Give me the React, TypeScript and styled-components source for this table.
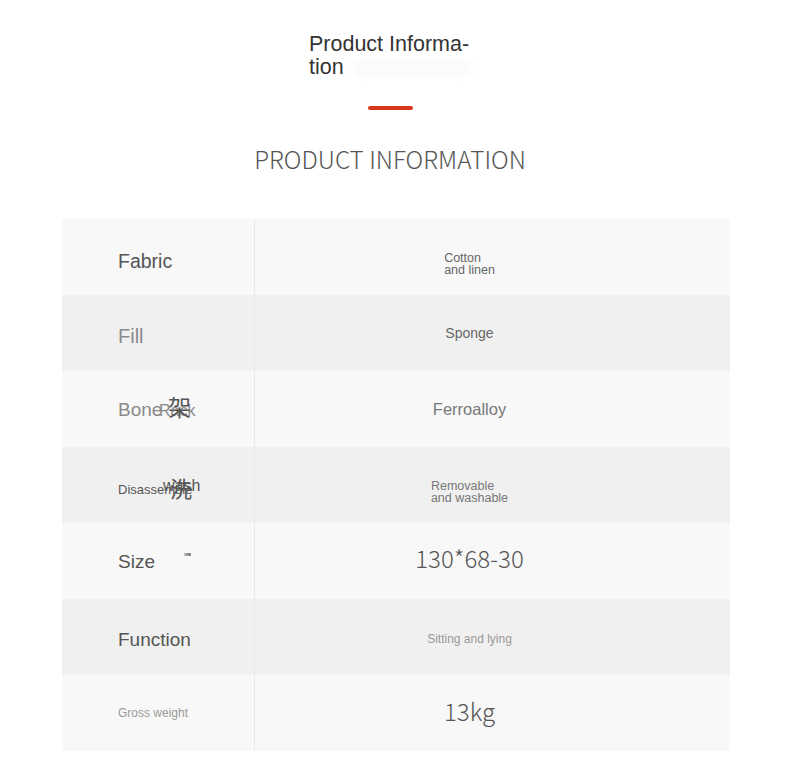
import React from "react";
import styled, { createGlobalStyle } from "styled-components";

const GlobalStyle = createGlobalStyle`
  html, body {
    margin: 0;
    padding: 0;
    background: #ffffff;
    font-family: "Liberation Sans", Arial, sans-serif;
  }
`;

type Row = {
  label: React.ReactNode;
  value: React.ReactNode;
  labelNudge: number;
  valueNudge: number;
};

export default function App() {
  const rows: Row[] = [
    {
      label: <Label size={19.5} color="#555">Fabric</Label>,
      value: <Narrow size={12.5} color="#666">Cotton<br />and linen</Narrow>,
      labelNudge: 4.5,
      valueNudge: 7,
    },
    {
      label: <Label size={20} color="#8a8a8a">Fill</Label>,
      value: <Value size={14} color="#666">Sponge</Value>,
      labelNudge: 3,
      valueNudge: 0.5,
    },
    {
      label: (
        <Stack>
          <Label size={19} color="#8a8a8a">Bone</Label>
          <Overlay left={41} top={2}><Label size={16} color="#8a8a8a">Rack</Label></Overlay>
          <Overlay left={50} top={-5}><Cjk size={23}>架</Cjk></Overlay>
        </Stack>
      ),
      value: <Value size={16.5} color="#777">Ferroalloy</Value>,
      labelNudge: 1,
      valueNudge: 1,
    },
    {
      label: (
        <Stack>
          <Label size={13} color="#555">Disassemble</Label>
          <Overlay left={45} top={-3}><Label size={16} color="#555">wash</Label></Overlay>
          <Overlay left={52} top={-4}><Cjk size={22}>洗</Cjk></Overlay>
        </Stack>
      ),
      value: <Narrow size={12.5} color="#777">Removable<br />and washable</Narrow>,
      labelNudge: 3.5,
      valueNudge: 7,
    },
    {
      label: (
        <Stack>
          <Label size={19} color="#555">Size</Label>
          <Mark />
        </Stack>
      ),
      value: <Big>130*68-30</Big>,
      labelNudge: 1,
      valueNudge: -3,
    },
    {
      label: <Label size={19} color="#555">Function</Label>,
      value: <Value size={12} color="#999">Sitting and lying</Value>,
      labelNudge: 2.5,
      valueNudge: 2,
    },
    {
      label: <Label size={12} color="#999">Gross weight</Label>,
      value: <Big>13kg</Big>,
      labelNudge: 0,
      valueNudge: -2,
    },
  ];

  return (
    <Page>
      <GlobalStyle />
      <Header>
        <Title>
          Product Informa-
          <br />
          tion
          <Haze />
        </Title>
        <Accent />
        <Subtitle>PRODUCT INFORMATION</Subtitle>
      </Header>
      <Table>
        {rows.map((row, i) => (
          <TableRow key={i} shaded={i % 2 === 1}>
            <LabelCell nudge={row.labelNudge}>{row.label}</LabelCell>
            <ValueCell nudge={row.valueNudge}>{row.value}</ValueCell>
          </TableRow>
        ))}
      </Table>
    </Page>
  );
}

const Page = styled.div`
  width: 790px;
  min-height: 779px;
  padding-top: 33px;
  box-sizing: border-box;
`;

const Header = styled.div`
  display: flex;
  flex-direction: column;
  align-items: center;
  padding-right: 10px;
`;

const Title = styled.div`
  position: relative;
  width: 164px;
  margin-left: 2px;
  font-size: 21.5px;
  line-height: 23px;
  color: #333;
`;

const Haze = styled.span`
  position: absolute;
  left: 44px;
  top: 26px;
  width: 118px;
  height: 18px;
  border-radius: 9px;
  background: #fbfbfb;
  filter: blur(2px);
`;

const Accent = styled.div`
  width: 45px;
  height: 4px;
  border-radius: 2px;
  background: #d8391c;
  margin-top: 27px;
`;

const Subtitle = styled.div`
  margin-top: 34px;
  font-family: "Noto Sans CJK SC", "Noto Sans", sans-serif;
  font-weight: 300;
  font-size: 24.3px;
  line-height: 30px;
  color: #555;
`;

const Table = styled.div`
  margin: 45px 60px 0 62px;
  width: 668px;
`;

const TableRow = styled.div<{ shaded: boolean }>`
  display: grid;
  grid-template-columns: 193px 1fr;
  height: 76px;
  background: ${(p) => (p.shaded ? "#f0f0f0" : "#f8f8f8")};
`;

const LabelCell = styled.div<{ nudge: number }>`
  display: flex;
  align-items: center;
  padding-left: 56px;
  border-right: 1px solid #ece8ea;
  box-sizing: border-box;

  & > * {
    margin-top: ${(p) => p.nudge * 2}px;
  }
`;

const ValueCell = styled.div<{ nudge: number }>`
  display: flex;
  align-items: center;
  justify-content: center;
  padding-right: 46px;
  box-sizing: border-box;

  & > * {
    margin-top: ${(p) => p.nudge * 2}px;
  }
`;

const Label = styled.span<{ size: number; color: string }>`
  font-size: ${(p) => p.size}px;
  color: ${(p) => p.color};
  white-space: nowrap;
  line-height: 1;
`;

const Stack = styled.span`
  position: relative;
  display: inline-block;
`;

const Overlay = styled.span<{ left: number; top: number }>`
  position: absolute;
  left: ${(p) => p.left}px;
  top: ${(p) => p.top}px;
  margin: 0;
`;

const Cjk = styled.span<{ size: number }>`
  font-family: "Noto Sans CJK SC", sans-serif;
  font-size: ${(p) => p.size}px;
  line-height: 1;
  color: #555;
`;

const Mark = styled.span`
  position: absolute;
  left: 66px;
  top: 1px;
  width: 7px;
  height: 3px;
  margin: 0;
  background: linear-gradient(90deg, #bbb, #777);
  border-radius: 1px;
`;

const Value = styled.span<{ size: number; color: string }>`
  font-size: ${(p) => p.size}px;
  color: ${(p) => p.color};
  line-height: 1.2;
`;

const Narrow = styled.span<{ size: number; color: string }>`
  display: inline-block;
  text-align: left;
  font-size: ${(p) => p.size}px;
  line-height: ${(p) => p.size}px;
  color: ${(p) => p.color};
`;

const Big = styled.span`
  font-family: "Noto Sans CJK SC", "Noto Sans", sans-serif;
  font-weight: 300;
  font-size: 24px;
  line-height: 1;
  color: #555;
`;
